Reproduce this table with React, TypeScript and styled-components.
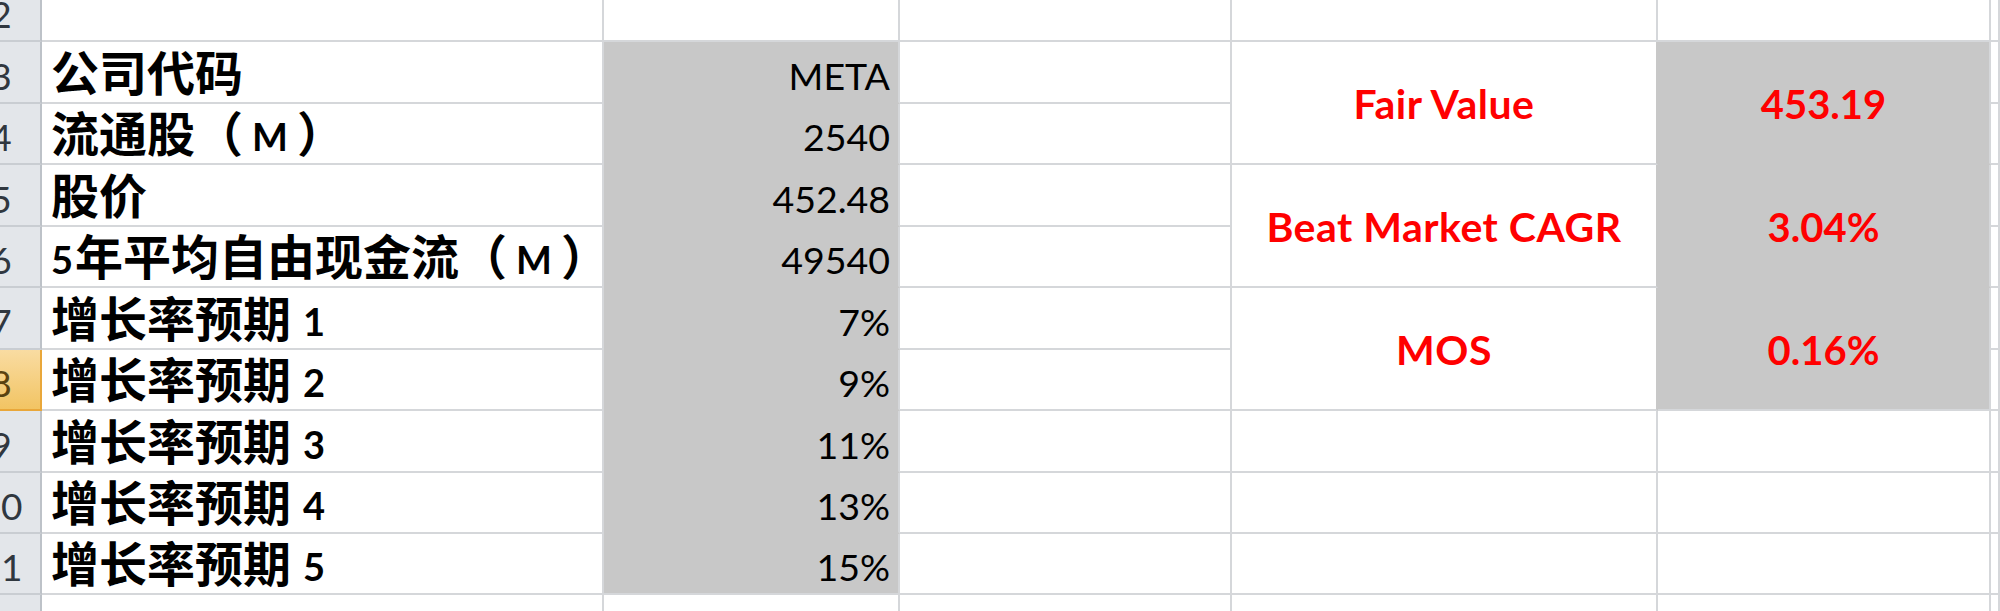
import React from "react";
import styled, { createGlobalStyle } from "styled-components";

const GRID = "#d5d7da";
const FILL = "#c8c8c8";
const RED = "#ff0000";

const Global = createGlobalStyle`
  html, body { margin: 0; padding: 0; background: #ffffff; overflow: hidden; }
  body { width: 2000px; height: 611px; }
`;

const Sheet = styled.div`
  display: grid;
  grid-template-columns: 42px 562px 296px 332px 426px 333px 9px;
  grid-template-rows: 42px 62px 61px 62px 61px 62px 61px 62px 61px 61px 61px;
  width: 2000px;
  height: 611px;
  overflow: hidden;
  font-family: Lato, "Noto Sans CJK SC", sans-serif;
  color: #000;
`;

const RowHead = styled.div<{ $selected?: boolean }>`
  box-sizing: border-box;
  display: flex;
  align-items: flex-end;
  overflow: hidden;
  padding-bottom: 8px;
  background: ${(p) => (p.$selected ? "linear-gradient(#f9dca2, #f2c463)" : "#e3e6ea")};
  border-right: 2px solid ${(p) => (p.$selected ? "#e9a73a" : "#bdc2c8")};
  border-bottom: 2px solid ${(p) => (p.$selected ? "#e9a73a" : "#c9cdd2")};
  color: ${(p) => (p.$selected ? "#5a4210" : "#30373f")};
  font-family: Lato, sans-serif;
  font-size: 37px;
  line-height: 1;
`;

const HeadLabel = styled.span`
  flex: 0 0 84px;
  margin-left: -41px;
  text-align: center;
`;

const GridCell = styled.div`
  box-sizing: border-box;
  border-right: 2px solid ${GRID};
  border-bottom: 2px solid ${GRID};
  background: #ffffff;
`;

const LabelCell = styled.div`
  box-sizing: border-box;
  display: flex;
  align-items: flex-end;
  overflow: hidden;
  white-space: nowrap;
  padding: 0 0 8px 9px;
  border-right: 2px solid ${GRID};
  border-bottom: 2px solid ${GRID};
  font-family: "Noto Sans CJK SC", sans-serif;
  font-weight: 700;
  font-size: 48px;
  line-height: 1;
`;

const Latin = styled.span<{ $pad: "none" | "left" | "both" }>`
  font-family: Lato, sans-serif;
  font-weight: 700;
  font-size: 38px;
  margin-left: ${(p) => (p.$pad === "none" ? "0" : p.$pad === "left" ? "12px" : "9px")};
  margin-right: ${(p) => (p.$pad === "both" ? "9px" : p.$pad === "none" ? "2px" : "0")};
`;

const ValueCell = styled.div<{ $last?: boolean }>`
  box-sizing: border-box;
  display: flex;
  align-items: flex-end;
  justify-content: flex-end;
  padding: 0 8px 8px 0;
  background: ${FILL};
  border-right: 2px solid ${GRID};
  border-bottom: 2px solid ${(p) => (p.$last ? GRID : FILL)};
  font-family: Lato, sans-serif;
  font-size: 37.5px;
  line-height: 1;
`;

const MetricLabel = styled.div`
  box-sizing: border-box;
  grid-row: span 2;
  display: flex;
  align-items: center;
  justify-content: center;
  border-right: 2px solid ${FILL};
  border-bottom: 2px solid ${GRID};
  color: ${RED};
  font-family: Lato, sans-serif;
  font-weight: 700;
  font-size: 41px;
  letter-spacing: 0.5px;
  line-height: 1;
  padding-top: 2px;
`;

const MetricValue = styled.div<{ $last?: boolean }>`
  box-sizing: border-box;
  grid-row: span 2;
  display: flex;
  align-items: center;
  justify-content: center;
  background: ${FILL};
  border-right: 2px solid ${GRID};
  border-bottom: 2px solid ${(p) => (p.$last ? GRID : FILL)};
  color: ${RED};
  font-family: Lato, sans-serif;
  font-weight: 700;
  font-size: 40px;
  line-height: 1;
  padding-top: 2px;
`;

const rows = [
  { n: 3, label: "公司代码", value: "META" },
  { n: 4, label: "流通股（M）", value: "2540" },
  { n: 5, label: "股价", value: "452.48" },
  { n: 6, label: "5年平均自由现金流（M）", value: "49540" },
  { n: 7, label: "增长率预期1", value: "7%" },
  { n: 8, label: "增长率预期2", value: "9%" },
  { n: 9, label: "增长率预期3", value: "11%" },
  { n: 10, label: "增长率预期4", value: "13%" },
  { n: 11, label: "增长率预期5", value: "15%" },
];

const metrics: Record<number, { label: string; value: string; last?: boolean }> = {
  3: { label: "Fair Value", value: "453.19" },
  5: { label: "Beat Market CAGR", value: "3.04%" },
  7: { label: "MOS", value: "0.16%", last: true },
};

function renderLabel(text: string) {
  const parts = text.split(/([A-Za-z0-9]+)/).filter(Boolean);
  return parts.map((p, i) => {
    if (!/^[A-Za-z0-9]+$/.test(p)) return <React.Fragment key={i}>{p}</React.Fragment>;
    const pad = i === 0 ? "none" : i === parts.length - 1 ? "left" : "both";
    return (
      <Latin key={i} $pad={pad}>
        {p}
      </Latin>
    );
  });
}

function EmptyRow({ n }: { n: number }) {
  return (
    <>
      <RowHead>
        <HeadLabel>{n}</HeadLabel>
      </RowHead>
      <GridCell />
      <GridCell />
      <GridCell />
      <GridCell />
      <GridCell />
      <GridCell />
    </>
  );
}

export default function App() {
  return (
    <>
      <Global />
      <Sheet>
        <EmptyRow n={2} />
        {rows.map((r, idx) => {
          const m = metrics[r.n];
          const inMetricZone = r.n >= 3 && r.n <= 8;
          return (
            <React.Fragment key={r.n}>
              <RowHead $selected={r.n === 8}>
                <HeadLabel>{r.n}</HeadLabel>
              </RowHead>
              <LabelCell>{renderLabel(r.label)}</LabelCell>
              <ValueCell $last={idx === rows.length - 1}>{r.value}</ValueCell>
              <GridCell />
              {m && <MetricLabel>{m.label}</MetricLabel>}
              {m && <MetricValue $last={m.last}>{m.value}</MetricValue>}
              {!inMetricZone && <GridCell />}
              {!inMetricZone && <GridCell />}
              <GridCell />
            </React.Fragment>
          );
        })}
        <EmptyRow n={12} />
      </Sheet>
    </>
  );
}
